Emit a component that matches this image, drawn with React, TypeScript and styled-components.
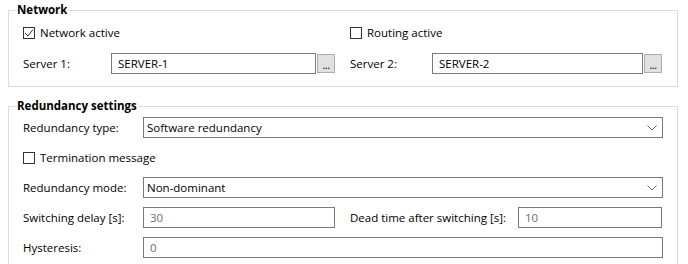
import React from "react";
import styled, { createGlobalStyle } from "styled-components";

const GlobalStyle = createGlobalStyle`
  html, body {
    margin: 0;
    padding: 0;
    background: #ffffff;
  }
  body {
    font-family: "Open Sans", "Noto Sans", "Liberation Sans", sans-serif;
    font-size: 11.5px;
    color: #000000;
  }
`;

const Page = styled.div`
  width: 670px;
  padding: 2px 10px 0 8px;
  display: flex;
  flex-direction: column;
  gap: 11px;
`;

const Group = styled.fieldset<{ $top: number; $gap: number }>`
  margin: 0;
  border: 1px solid #dcdcdc;
  padding: ${(p) => p.$top}px 14px 12px 14px;
  display: grid;
  row-gap: ${(p) => p.$gap}px;
  min-width: 0;
`;

const Title = styled.legend`
  font-weight: 700;
  font-size: 11.5px;
  line-height: 16px;
  padding: 0 1px;
  margin-left: -7px;
`;

const Row = styled.div`
  display: flex;
  align-items: center;
  height: 21px;
`;

const TwoCols = styled.div`
  display: grid;
  grid-template-columns: 312px 312px;
  column-gap: 15px;
  height: 21px;
`;

const Field = styled.div`
  display: flex;
  align-items: center;
  min-width: 0;
`;

const Label = styled.span<{ $w: number }>`
  width: ${(p) => p.$w}px;
  flex: none;
  white-space: nowrap;
  line-height: 21px;
`;

const TextBox = styled.div<{ $disabled?: boolean }>`
  flex: 1;
  height: 21px;
  box-sizing: border-box;
  border: 1px solid #7a7a7a;
  background: #ffffff;
  padding: 0 6px;
  line-height: 19px;
  color: ${(p) => (p.$disabled ? "#6d6d6d" : "#000000")};
  white-space: nowrap;
  overflow: hidden;
`;

const BrowseButton = styled.div`
  flex: none;
  width: 18px;
  height: 19px;
  box-sizing: border-box;
  margin-left: 1px;
  background: #e1e1e1;
  border: 1px solid #adadad;
  font-size: 11px;
  line-height: 19px;
  text-align: center;
  color: #000;
  letter-spacing: -0.5px;
`;

const Select = styled.div`
  flex: 1;
  height: 21px;
  box-sizing: border-box;
  border: 1px solid #7a7a7a;
  background: #ffffff;
  padding: 0 5px 0 3px;
  display: flex;
  align-items: center;
  justify-content: space-between;
`;

const CheckRow = styled.label`
  display: flex;
  align-items: center;
  gap: 5px;
  height: 21px;
  white-space: nowrap;
`;

const Box = styled.span`
  width: 12px;
  height: 12px;
  box-sizing: border-box;
  border: 1px solid #333333;
  background: #ffffff;
  display: flex;
  align-items: center;
  justify-content: center;
`;

const Check = ({ checked, label }: { checked?: boolean; label: string }) => (
  <CheckRow>
    <Box>
      {checked && (
        <svg width="10" height="10" viewBox="0 0 10 10">
          <path d="M1 5 L4 8 L9 1.5" fill="none" stroke="#333" strokeWidth="1" />
        </svg>
      )}
    </Box>
    {label}
  </CheckRow>
);

const Chevron = () => (
  <svg width="10" height="6" viewBox="0 0 10 6">
    <path d="M0.5 0.5 L5 5 L9.5 0.5" fill="none" stroke="#606060" strokeWidth="1" />
  </svg>
);

export default function App() {
  return (
    <>
      <GlobalStyle />
      <Page>
        <Group $top={4} $gap={10}>
          <Title>Network</Title>
          <TwoCols>
            <Check checked label="Network active" />
            <Check label="Routing active" />
          </TwoCols>
          <TwoCols>
            <Field>
              <Label $w={88}>Server 1:</Label>
              <TextBox>SERVER-1</TextBox>
              <BrowseButton>...</BrowseButton>
            </Field>
            <Field>
              <Label $w={82}>Server 2:</Label>
              <TextBox>SERVER-2</TextBox>
              <BrowseButton>...</BrowseButton>
            </Field>
          </TwoCols>
        </Group>
        <Group $top={3} $gap={9}>
          <Title>Redundancy settings</Title>
          <Row>
            <Label $w={120}>Redundancy type:</Label>
            <Select>
              <span>Software redundancy</span>
              <Chevron />
            </Select>
          </Row>
          <Check label="Termination message" />
          <Row>
            <Label $w={120}>Redundancy mode:</Label>
            <Select>
              <span>Non-dominant</span>
              <Chevron />
            </Select>
          </Row>
          <TwoCols>
            <Field>
              <Label $w={120}>Switching delay [s]:</Label>
              <TextBox $disabled>30</TextBox>
            </Field>
            <Field>
              <Label $w={168}>Dead time after switching [s]:</Label>
              <TextBox $disabled>10</TextBox>
            </Field>
          </TwoCols>
          <Row>
            <Label $w={120}>Hysteresis:</Label>
            <TextBox $disabled>0</TextBox>
          </Row>
        </Group>
      </Page>
    </>
  );
}
